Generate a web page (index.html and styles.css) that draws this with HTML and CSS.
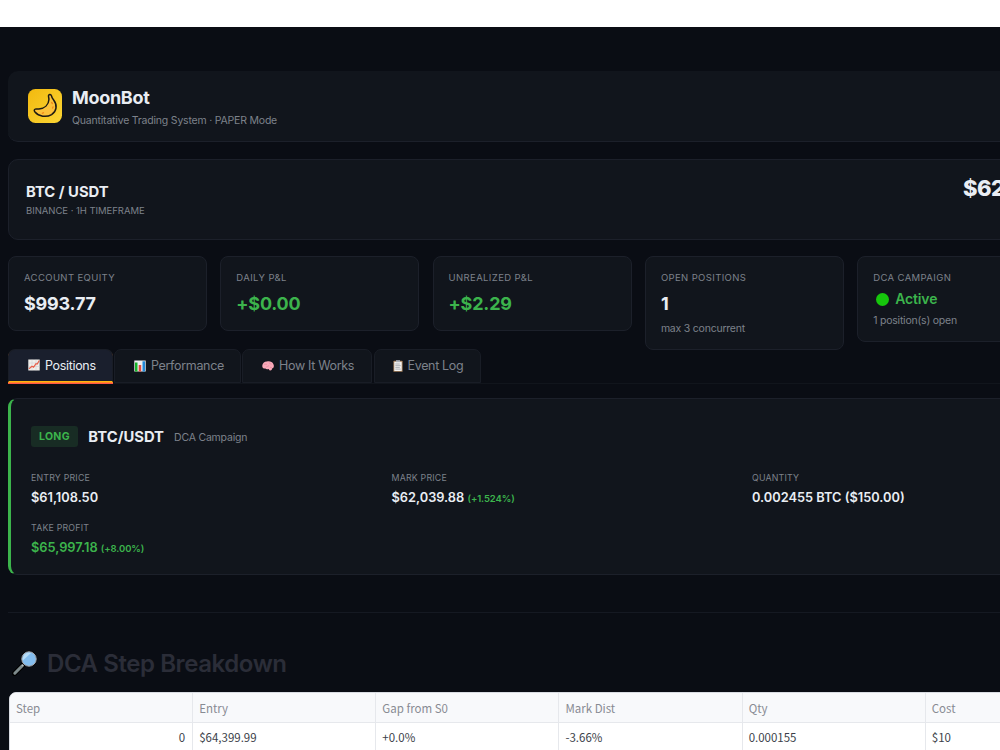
FILE: index.html
```
<!DOCTYPE html>
<html lang="en">
    <head>
        <meta charset="utf-8">
        <title>MoonBot</title>
        <link rel="stylesheet" href="styles.css">
    </head>
    <body>
        <div class="topbar"></div>
        <main class="page">
            <header class="header">
                <svg class="logo" viewBox="0 0 34 34">
                    <defs>
                        <linearGradient id="gold" x1="0" y1="0" x2="1" y2="1">
                            <stop offset="0" stop-color="#f2b90f"/>
                            <stop offset="1" stop-color="#fbd534"/>
                        </linearGradient>
                    </defs>
                    <rect width="34" height="34" rx="7.5" fill="url(#gold)"/>
                    <path d="M20.600 6.300C21.300 5.200 22.900 5.300 23.400 6.700C23.700 8.600 24.500 9.700 25.800 11.300C29.600 16.200 28.600 22.500 23.600 25.600C18.300 28.700 10.800 27.600 7 23C6 21.700 6 20.500 7.200 20.100C8.300 19.800 9.400 20.200 10.900 20C16.700 19.300 20.600 15.700 20.900 10.700C21 9 20.200 7.400 20.600 6.300z" fill="#fcc23a" stroke="#1d1a12" stroke-width="1.500" stroke-linejoin="round"/>
                    <path d="M23.600 13.500l.8 1M15.500 23.700l-1.200.6M25 18l-.4 1" stroke="#f08c1d" stroke-width="1.400" stroke-linecap="round"/>
                </svg>
                <div>
                    <h1 class="brand">MoonBot</h1>
                    <p class="tagline">Quantitative Trading System · PAPER Mode</p>
                </div>
            </header>

            <section class="ticker">
                <div>
                    <p class="pair">BTC / USDT</p>
                    <p class="exchange">BINANCE · 1H TIMEFRAME</p>
                </div>
                <p class="price">$62,039.88</p>
            </section>

            <section class="stats">
                <div class="stat">
                    <p class="label">ACCOUNT EQUITY</p>
                    <p class="value">$993.77</p>
                </div>
                <div class="stat">
                    <p class="label">DAILY P&amp;L</p>
                    <p class="value green">+$0.00</p>
                </div>
                <div class="stat">
                    <p class="label">UNREALIZED P&amp;L</p>
                    <p class="value green">+$2.29</p>
                </div>
                <div class="stat">
                    <p class="label">OPEN POSITIONS</p>
                    <p class="value">1</p>
                    <p class="note">max 3 concurrent</p>
                </div>
                <div class="stat">
                    <p class="label">DCA CAMPAIGN</p>
                    <p class="status"><span class="dot"></span>Active</p>
                    <p class="note">1 position(s) open</p>
                </div>
            </section>

            <nav class="tabs">
                <button class="tab tab-positions active">
                    <svg class="icon" viewBox="0 0 12 12">
                        <rect x=".3" y=".5" width="11.400" height="11" fill="#f1efeb"/>
                        <path d="M.5 4h11M.5 7.500h11M4 .7v10.600M8 .7v10.600" stroke="#c9cbd0" stroke-width=".5"/>
                        <path d="M1 9.800l3-2.600 1.600 1L8 4.600l1.200.4L11.300 1.500" fill="none" stroke="#e8604c" stroke-width="1.200"/>
                    </svg>
                    Positions
                </button>
                <button class="tab tab-performance">
                    <svg class="icon" viewBox="0 0 12 12">
                        <rect x=".3" y=".5" width="11.400" height="11" fill="#eeefef"/>
                        <rect x="1" y="2.500" width="2.500" height="9" fill="#16b328"/>
                        <rect x="4.700" y="5" width="2.500" height="6.500" fill="#e24b40"/>
                        <rect x="8.500" y="1.300" width="2.500" height="10.200" fill="#2389d8"/>
                    </svg>
                    Performance
                </button>
                <button class="tab tab-how">
                    <svg class="icon" viewBox="0 0 12 12">
                        <path d="M.3 6.200C.1 3.500 2.300 1.300 5 1.400c3-.5 5.500.5 6.300 2.600 1.200 2 .3 4.200-1.300 4.600.1 1.500-1.300 2.200-2.500 1.600L6.600 8.900C5 9.800 3.800 9.200 3.500 8.500 1.700 8.800.3 7.700.3 6.200z" fill="#f9a9b9"/>
                        <path d="M2 4.500c1.200-.8 2 .3 3-.4M4.200 6.900c1.200.2 1.500-1.400 2.900-1M7.200 2.600c.2 1.200 1.300 1.100 2.300 1.600M8 7.300c.8-.2 1.500.2 2 .8" fill="none" stroke="#dd7d93" stroke-width=".6"/>
                    </svg>
                    How It Works
                </button>
                <button class="tab tab-log">
                    <svg class="icon" viewBox="0 0 12 12">
                        <rect x="1.400" y=".8" width="9.200" height="11" rx=".6" fill="#a5805c"/>
                        <rect x="2.300" y="1.800" width="7.400" height="9.200" fill="#f4f3f1"/>
                        <rect x="4" y=".2" width="4" height="2" fill="#a9afb7"/>
                        <path d="M3.300 4h4.500M3.300 5.700h5.400M3.300 7.400h4.500M3.300 9.100h5.400" stroke="#8e939b" stroke-width=".7"/>
                    </svg>
                    Event Log
                </button>
            </nav>

            <section class="position">
                <div class="position-head">
                    <span class="side">LONG</span>
                    <span class="symbol">BTC/USDT</span>
                    <span class="kind">DCA Campaign</span>
                </div>
                <div class="details">
                    <div>
                        <p class="detail-label">ENTRY PRICE</p>
                        <p class="detail-value">$61,108.50</p>
                    </div>
                    <div>
                        <p class="detail-label">MARK PRICE</p>
                        <p class="detail-value">$62,039.88 <span class="pct">(+1.524%)</span></p>
                    </div>
                    <div>
                        <p class="detail-label">QUANTITY</p>
                        <p class="detail-value">0.002455 BTC ($150.00)</p>
                    </div>
                    <div>
                        <p class="detail-label">TAKE PROFIT</p>
                        <p class="detail-value green">$65,997.18 <span class="pct">(+8.00%)</span></p>
                    </div>
                </div>
            </section>

            <hr class="divider">

            <h2 class="heading">
                <svg class="search" viewBox="0 0 26 26">
                    <path d="M2.500 23.500L10.500 15.500" stroke="#000" stroke-width="5" stroke-linecap="round"/>
                    <path d="M2.800 23.200L10.500 15.500" stroke="#7e8a8c" stroke-width="3" stroke-linecap="round"/>
                    <path d="M10 16l2.500-2.500" stroke="#b4babb" stroke-width="1.500"/>
                    <circle cx="17" cy="9" r="8.300" fill="#06080d"/>
                    <circle cx="17" cy="9" r="7.200" fill="#84bdee" stroke="#a7a9ad" stroke-width="1"/>
                    <path d="M10.800 10.500A6.500 6.500 0 0 1 19 2.900z" fill="#b6dcf8"/>
                </svg>
                DCA Step Breakdown
            </h2>

            <table class="steps">
                <thead>
                    <tr><th>Step</th><th>Entry</th><th>Gap from S0</th><th>Mark Dist</th><th>Qty</th><th>Cost</th></tr>
                </thead>
                <tbody>
                    <tr><td class="num">0</td><td>$64,399.99</td><td>+0.0%</td><td>-3.66%</td><td>0.000155</td><td>$10</td></tr>
                </tbody>
            </table>
        </main>
    </body>
</html>
```
FILE: styles.css
```
*{
    box-sizing: border-box;
}
body{
    margin: 0;
    height: 750px;
    overflow: hidden;
    background-color: #0a0d14;
    color: #e9edf3;
    font-family: Inter, "Liberation Sans", sans-serif;
}
p, h1, h2{
    margin: 0;
}
.topbar{
    height: 27px;
    background-color: white;
}
.page{
    width: 1113px;
    padding: 44px 0 0 8px;
}
.header{
    display: flex;
    gap: 10px;
    height: 71px;
    padding: 18px 20px;
    background-color: #11151c;
    border-radius: 10px;
    border-bottom: 1px solid #1c202a;
}
.logo{
    width: 34px;
    height: 34px;
}
.brand{
    margin-top: -1px;
    font-size: 18px;
    line-height: 20px;
    font-weight: 700;
    letter-spacing: -0.300px;
}
.tagline{
    margin-top: 6px;
    font-size: 10.500px;
    line-height: 14px;
    letter-spacing: -0.200px;
    color: #7d828b;
}
.ticker{
    display: flex;
    justify-content: space-between;
    height: 81px;
    margin-top: 17px;
    padding: 22px 17px;
    background-color: #11151c;
    border: 1px solid #1c202a;
    border-radius: 10px;
}
.pair{
    font-size: 14.800px;
    line-height: 20px;
    font-weight: 700;
}
.exchange{
    margin-top: 2px;
    font-size: 9.500px;
    line-height: 14px;
    letter-spacing: -0.040px;
    color: #7d828b;
}
.price{
    width: 132px;
    margin-top: -7px;
    font-size: 22px;
    line-height: 26px;
    font-weight: 800;
    letter-spacing: -0.500px;
}
.stats{
    display: grid;
    grid-template-columns: repeat(5, 199px);
    align-items: start;
    column-gap: 13.300px;
    height: 93px;
    margin-top: 16px;
}
.stat{
    padding: 14px 15px 15px;
    background-color: #11151c;
    border: 1px solid #1c202a;
    border-radius: 8px;
}
.label{
    font-size: 9.500px;
    line-height: 14px;
    letter-spacing: 0.380px;
    color: #7d828b;
}
.value{
    margin-top: 7px;
    font-size: 18px;
    line-height: 23px;
    font-weight: 700;
    letter-spacing: -0.200px;
}
.green{
    color: #3cb44c;
}
.note{
    margin-top: 6px;
    margin-bottom: -2px;
    font-size: 10.500px;
    line-height: 14px;
    letter-spacing: -0.220px;
    color: #7d828b;
}
.value + .note{
    margin-top: 7px;
}
.status{
    display: flex;
    align-items: center;
    gap: 6px;
    margin: 5px 0 0 3px;
    font-size: 14px;
    line-height: 18px;
    font-weight: 600;
    letter-spacing: -0.150px;
    color: #3cb44c;
}
.dot{
    width: 13px;
    height: 13px;
    border-radius: 50%;
    background-color: #16c60c;
}
.tabs{
    display: flex;
    gap: 1.500px;
    height: 35px;
    border-bottom: 1px solid #11151c;
}
.tab{
    display: flex;
    align-items: center;
    gap: 5px;
    height: 34px;
    padding: 0 0 1px 19px;
    background-color: #11151c;
    border: 1px solid #191d26;
    border-radius: 7px 7px 0 0;
    font-family: inherit;
    font-size: 12.500px;
    letter-spacing: -0.330px;
    white-space: nowrap;
    color: #7d828b;
}
.tab-positions{
    width: 104.500px;
}
.tab-performance{
    width: 126.500px;
}
.tab-how{
    width: 130px;
}
.tab-log{
    width: 107px;
    gap: 4px;
    padding-left: 17px;
}
.active{
    height: 33px;
    background-color: #1a1f2d;
    color: #e9edf3;
    border-bottom: 1px solid #fdb60c;
    box-shadow: 0 1px #ff8a26, 0 2px #ff5545;
}
.icon{
    width: 12px;
    height: 12px;
}
.position{
    height: 177px;
    margin-top: 14px;
    padding: 27px 20px;
    background-color: #11151c;
    border: 1px solid #1c202a;
    border-left: 3px solid #3cb44c;
    border-radius: 9px;
}
.position-head{
    display: flex;
    align-items: center;
    height: 21px;
}
.side{
    padding: 0 8px;
    background-color: #182c24;
    border-radius: 3px;
    font-size: 10.500px;
    line-height: 21px;
    font-weight: 700;
    letter-spacing: 0.300px;
    color: #3cb44c;
}
.symbol{
    margin-left: 10.500px;
    font-size: 14.800px;
    font-weight: 700;
}
.kind{
    margin-left: 10px;
    padding-top: 1px;
    font-size: 10.500px;
    letter-spacing: -0.200px;
    color: #7d828b;
}
.details{
    display: grid;
    grid-template-columns: repeat(3, 360.500px);
    row-gap: 13px;
    margin-top: 25px;
}
.detail-label{
    font-size: 8.800px;
    line-height: 12px;
    letter-spacing: 0.200px;
    color: #7d828b;
}
.detail-value{
    margin-top: 4px;
    font-size: 12.800px;
    line-height: 20px;
    font-weight: 600;
}
.pct{
    font-size: 9.500px;
    letter-spacing: -0.100px;
    color: #3cb44c;
}
.divider{
    height: 1px;
    margin: 37px 0 0;
    border: 0;
    background-color: #151922;
}
.heading{
    display: flex;
    align-items: center;
    gap: 9px;
    height: 30px;
    margin: 35px 0 0 4px;
    font-size: 24px;
    font-weight: 600;
    letter-spacing: -0.420px;
    color: #2b2d38;
}
.search{
    width: 26px;
    height: 26px;
}
.steps{
    width: 1101px;
    margin: 14px 0 0 1px;
    table-layout: fixed;
    border-spacing: 0;
    border: 1px solid #d9dce2;
    border-radius: 7px 0 0 0;
    background-color: white;
    overflow: hidden;
    font-family: "Noto Sans CJK SC", sans-serif;
    font-size: 11.500px;
    color: #3c3f4a;
}
.steps th, .steps td{
    height: 30px;
    padding: 0 6px;
    border-right: 1px solid #e6e8ec;
    border-bottom: 1px solid #e6e8ec;
    font-weight: 400;
    line-height: 16px;
    text-align: left;
}
.steps td{
    height: 29px;
}
.steps th{
    background-color: #f8f9fb;
    color: #888b93;
}
.steps .num{
    padding-right: 7px;
    text-align: right;
}
```
